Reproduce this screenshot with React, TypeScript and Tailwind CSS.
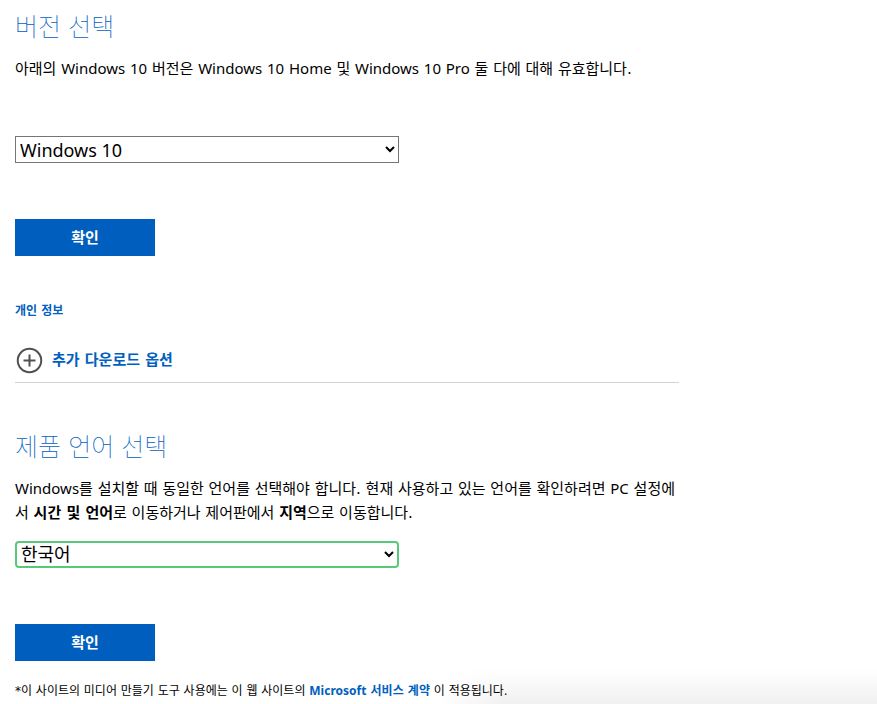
import { useState, type ReactNode } from "react";

function Heading({ children }: { children: ReactNode }) {
  return (
    <h2 className="text-[25px] leading-7 font-thin text-[#0060bf] font-['DejaVu_Sans_Condensed','Noto_Sans_CJK_KR',sans-serif]">
      {children}
    </h2>
  );
}

function Latin({ children }: { children: ReactNode }) {
  return (
    <span lang="en" className="leading-none font-['Noto_Sans',sans-serif]">
      {children}
    </span>
  );
}

function ConfirmButton() {
  return (
    <button
      type="submit"
      className="mt-14 block h-[37px] w-[140px] bg-[#005fbe] text-[15px] leading-6 font-bold text-white"
    >
      확인
    </button>
  );
}

function PlusCircle() {
  return (
    <svg width="27" height="27" viewBox="0 0 27 27" fill="none" stroke="#505050" strokeWidth="2" aria-hidden="true">
      <circle cx="13.5" cy="13.5" r="11.75" />
      <path d="M7.5 13.5h12M13.5 7.5v12" />
    </svg>
  );
}

export default function App() {
  const [edition, setEdition] = useState("win10");
  const [language, setLanguage] = useState("ko");

  return (
    <div className="relative overflow-hidden bg-white px-[15px] pt-[14px] pb-1 text-[15px] leading-6 text-black font-['DejaVu_Sans','Noto_Sans_CJK_KR',sans-serif]">
      <main className="max-w-[664px]">
        <form onSubmit={(e) => e.preventDefault()}>
          <Heading>버전 선택</Heading>
          <p className="mt-[15px]">
            아래의 <Latin>Windows</Latin> <Latin>10</Latin> 버전은 <Latin>Windows</Latin> <Latin>10</Latin>{" "}
            <Latin>Home</Latin> 및 <Latin>Windows</Latin> <Latin>10</Latin> <Latin>Pro</Latin> 둘 다에 대해 유효합니다.
          </p>
          <select
            aria-label="버전 선택"
            value={edition}
            onChange={(e) => setEdition(e.target.value)}
            className="mt-[55px] block h-[27px] w-full max-w-[384px] border border-[#767676] bg-white text-[18px] leading-6 font-['Noto_Sans',sans-serif]"
          >
            <option value="win10">Windows 10</option>
          </select>
          <ConfirmButton />
        </form>

        <a href="#privacy" className="mt-[47px] block w-fit text-xs leading-4 font-bold text-[#0060bf]">
          개인 정보
        </a>
        <div className="mt-[27px] border-b border-[#d2d2d2] pb-2">
          <button type="button" aria-expanded="false" className="flex h-7 items-center gap-[9px] pl-px font-bold text-[#0060bf]">
            <PlusCircle />
            추가 다운로드 옵션
          </button>
        </div>

        <form className="mt-[51px]" onSubmit={(e) => e.preventDefault()}>
          <Heading>제품 언어 선택</Heading>
          <p className="mt-[15px]">
            <Latin>Windows</Latin>를 설치할 때 동일한 언어를 선택해야 합니다. 현재 사용하고 있는 언어를 확인하려면{" "}
            <Latin>PC</Latin> 설정에서 <strong>시간 및 언어</strong>로 이동하거나 제어판에서 <strong>지역</strong>으로
            이동합니다.
          </p>
          <select
            aria-label="제품 언어 선택"
            value={language}
            onChange={(e) => setLanguage(e.target.value)}
            className="mt-4 block h-[27px] w-full max-w-[384px] rounded-[4px] border-2 border-[#57ca7a] bg-white text-[18px] leading-6"
          >
            <option value="ko">한국어</option>
          </select>
          <ConfirmButton />
        </form>

        <p className="mt-5 text-xs leading-5">
          *이 사이트의 미디어 만들기 도구 사용에는 이 웹 사이트의{" "}
          <a href="#terms" className="font-bold text-[#0060bf]">
            <Latin>Microsoft</Latin> 서비스 계약
          </a>{" "}
          이 적용됩니다.
        </p>
      </main>
      <div className="pointer-events-none absolute right-0 bottom-0 h-9 w-1/2 bg-linear-to-b from-transparent to-black/6 mask-l-from-85%" />
    </div>
  );
}
